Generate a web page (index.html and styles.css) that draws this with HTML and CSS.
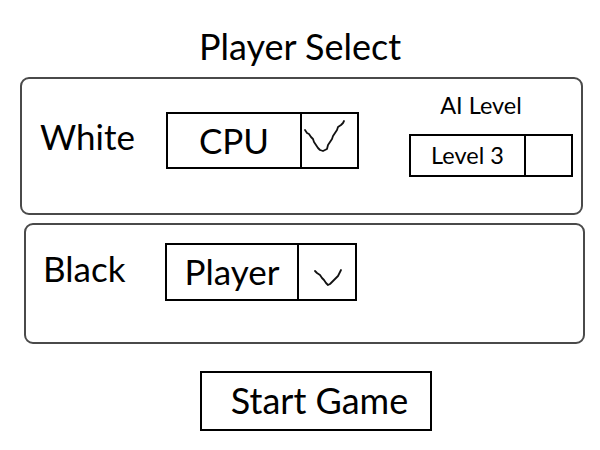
FILE: index.html
```html
<!DOCTYPE html>
<html>
<head>
<meta charset="utf-8">
<link rel="stylesheet" href="styles.css">
</head>
<body>
<div class="page">
  <h1 class="title">Player Select</h1>
  <section class="card card-white">
    <div class="side-label">White</div>
    <div class="select select-cpu">
      <span class="select-value">CPU</span>
      <span class="select-btn">
        <svg width="56" height="56" viewBox="0 0 56 56"><polyline points="3,16 5,19 7,20 9,23 11,25 12,28 14,31 16,34 18,36 21,37 23,36 25,35 26,31 28,28 30,25 31,22 33,19 35,16 36,13 39,11 41,9 42,7" fill="none" stroke="#111" stroke-width="1.8" stroke-linejoin="round" stroke-linecap="round"/></svg>
      </span>
    </div>
    <div class="ai">
      <div class="ai-label">AI Level</div>
      <div class="select select-level">
        <span class="select-value">Level 3</span>
        <span class="select-btn"></span>
      </div>
    </div>
  </section>
  <section class="card card-black">
    <div class="side-label">Black</div>
    <div class="select select-player">
      <span class="select-value">Player</span>
      <span class="select-btn">
        <svg width="57" height="57" viewBox="0 0 57 57"><polyline points="16,26 18,28 21,30 23,33 25,35 27,38 29,40 31,39 33,37 35,35 37,33 39,31 40,29 41,27 42,25" fill="none" stroke="#111" stroke-width="1.8" stroke-linejoin="round" stroke-linecap="round"/></svg>
      </span>
    </div>
  </section>
  <div class="actions">
    <button class="start">Start Game</button>
  </div>
</div>
</body>
</html>
```
FILE: styles.css
```css
* { box-sizing: border-box; }
html, body { margin: 0; padding: 0; background: #fff; }
body {
  width: 600px;
  height: 450px;
  overflow: hidden;
  font-family: "Lato", "Open Sans", sans-serif;
  color: #000;
}
.page { display: flex; flex-direction: column; }
.title {
  margin: 26px 0 0 0;
  height: 51px;
  font-size: 36px;
  font-weight: 400;
  line-height: 40px;
  text-align: center;
}
.card {
  border: 2px solid #4a4a4a;
  border-radius: 9px;
  display: flex;
  align-items: flex-start;
}
.card-white {
  margin-left: 20px;
  width: 563px;
  height: 138px;
  padding: 33px 0 0 18px;
}
.card-black {
  margin-top: 8px;
  margin-left: 24px;
  width: 561px;
  height: 121px;
  padding: 18px 0 0 17px;
}
.side-label {
  font-size: 35px;
  line-height: 40px;
}
.card-white .side-label { width: 126px; margin-top: 4px; }
.card-black .side-label { width: 122px; margin-top: 5px; }
.select {
  display: flex;
  border: 2px solid #000;
}
.select-value {
  display: flex;
  align-items: center;
  justify-content: center;
  border-right: 2px solid #000;
}
.select-btn { display: block; }
.select-btn svg { display: block; }
.select-cpu { width: 193px; height: 57px; }
.select-cpu .select-value { width: 136px; font-size: 35px; padding-bottom: 2px; }
.select-cpu .select-btn { width: 55px; }
.select-player { width: 192px; height: 58px; }
.select-player .select-value { width: 134px; font-size: 35px; padding-bottom: 2px; }
.select-player .select-btn { width: 56px; }
.ai {
  margin-left: 50px;
  margin-top: -20px;
  display: flex;
  flex-direction: column;
}
.ai-label {
  font-size: 23.5px;
  line-height: 26px;
  text-align: center;
  padding-right: 20px;
  height: 42px;
}
.select-level { width: 164px; height: 43px; }
.select-level .select-value { width: 115px; font-size: 23.5px; padding-bottom: 2px; }
.select-level .select-btn { width: 45px; }
.actions {
  display: flex;
  justify-content: center;
  margin-top: 27px;
  padding-left: 31px;
}
.start {
  width: 232px;
  height: 60px;
  border: 2px solid #000;
  background: #fff;
  font-family: inherit;
  font-size: 36px;
  color: #000;
  padding: 0 0 2px 8px;
  border-radius: 0;
}
```
